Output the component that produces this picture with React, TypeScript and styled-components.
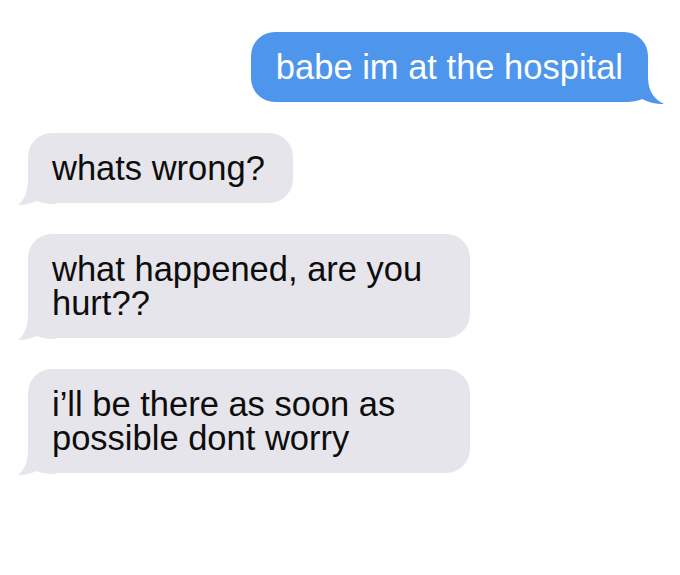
import React from "react";
import styled, { createGlobalStyle } from "styled-components";

const GlobalStyle = createGlobalStyle`
  html, body {
    margin: 0;
    padding: 0;
    background: #ffffff;
  }
  body {
    font-family: "Liberation Sans", Arial, Helvetica, sans-serif;
  }
`;

const Thread = styled.div`
  display: flex;
  flex-direction: column;
  gap: 31px;
  padding: 32px 32px 0 28px;
  width: 680px;
  height: 575px;
  box-sizing: border-box;
`;

const Row = styled.div<{ $sent: boolean }>`
  display: flex;
  justify-content: ${(p) => (p.$sent ? "flex-end" : "flex-start")};
`;

const Bubble = styled.div<{ $sent: boolean }>`
  position: relative;
  max-width: 442px;
  box-sizing: border-box;
  padding: ${(p) => (p.$sent ? "18px 25px 18px 25px" : "18px 28px 18px 24px")};
  border-radius: 24px;
  font-size: 34.5px;
  line-height: 34px;
  background: ${(p) => (p.$sent ? "#4e95ec" : "#e6e5eb")};
  color: ${(p) => (p.$sent ? "#ffffff" : "#0d0d0d")};
`;

const Text = styled.span`
  position: relative;
  z-index: 1;
`;

const Tail = styled.svg<{ $sent: boolean }>`
  position: absolute;
  bottom: -3px;
  width: 40px;
  height: 30px;
  z-index: 0;
  ${(p) =>
    p.$sent
      ? `right: -16px; transform: scaleX(-1);`
      : `left: -12px;`}
`;

function BubbleTail({ sent, color }: { sent: boolean; color: string }) {
  return (
    <Tail $sent={sent} viewBox="0 0 40 30" aria-hidden="true">
      {sent ? (
        <path
          d="M16 2 C16 16 10 24 0 29 C9 29 16 27 22 24 C26 26 31 27 40 27 L40 2 Z"
          fill={color}
        />
      ) : (
        <path
          d="M12 2 C12 17 8 24 2 29 C10 29 16 27 21 25 C25 27 31 28 40 28 L40 2 Z"
          fill={color}
        />
      )}
    </Tail>
  );
}

type Message = { text: string; sent: boolean };

const messages: Message[] = [
  { text: "babe im at the hospital", sent: true },
  { text: "whats wrong?", sent: false },
  { text: "what happened, are you hurt??", sent: false },
  { text: "i\u2019ll be there as soon as possible dont worry", sent: false },
];

export default function App() {
  return (
    <>
      <GlobalStyle />
      <Thread>
        {messages.map((m, i) => (
          <Row key={i} $sent={m.sent}>
            <Bubble $sent={m.sent}>
              <BubbleTail sent={m.sent} color={m.sent ? "#4e95ec" : "#e6e5eb"} />
              <Text>{m.text}</Text>
            </Bubble>
          </Row>
        ))}
      </Thread>
    </>
  );
}
